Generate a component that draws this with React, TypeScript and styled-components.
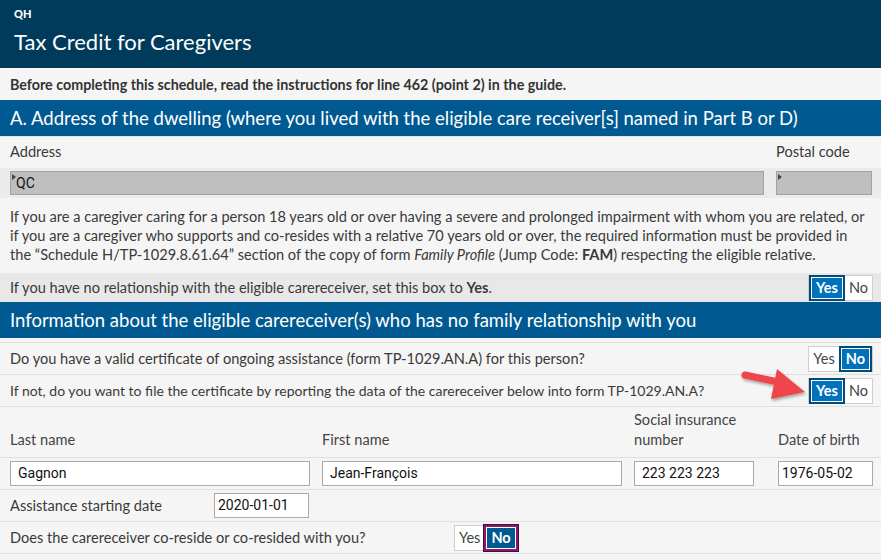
import styled, { createGlobalStyle } from 'styled-components';

const GlobalStyle = createGlobalStyle`
  body {
    margin: 0;
    background: #f5f5f5;
    font-family: Lato, "Open Sans", sans-serif;
    color: #3a3a3a;
  }
`;

const Toggle = ({ value, focus }: { value: 'yes' | 'no'; focus?: boolean }) => (
  <ToggleGroup>
    <ToggleOption $on={value === 'yes'}>Yes</ToggleOption>
    <ToggleOption $on={value === 'no'} $focus={focus && value === 'no'}>
      No
    </ToggleOption>
  </ToggleGroup>
);

const Arrow = () => (
  <ArrowSvg width="74" height="42" viewBox="0 0 74 42">
    <defs>
      <filter id="sh" x="-20%" y="-20%" width="140%" height="160%">
        <feDropShadow dx="1" dy="2" stdDeviation="1.5" floodColor="#000" floodOpacity="0.35" />
      </filter>
    </defs>
    <g filter="url(#sh)">
      <path d="M6 9 L44 17" stroke="#f0454c" strokeWidth="7" strokeLinecap="round" />
      <path d="M38 3 L66 26 L32 33 Z" fill="#f0454c" />
    </g>
  </ArrowSvg>
);

export default function App() {
  return (
    <Page>
      <GlobalStyle />
      <Header>
        <Code>QH</Code>
        <Title>Tax Credit for Caregivers</Title>
      </Header>
      <Notice>Before completing this schedule, read the instructions for line 462 (point 2) in the guide.</Notice>
      <SectionHeader>A. Address of the dwelling (where you lived with the eligible care receiver[s] named in Part B or D)</SectionHeader>

      <AddressLabels>
        <span>Address</span>
        <span>Postal code</span>
      </AddressLabels>
      <AddressInputs>
        <LockedField>QC</LockedField>
        <LockedField />
      </AddressInputs>

      <Paragraph>
        If you are a caregiver caring for a person 18 years old or over having a severe and prolonged impairment with whom you are related, or
        <br />
        if you are a caregiver who supports and co-resides with a relative 70 years old or over, the required information must be provided in
        <br />
        the “Schedule H/TP-1029.8.61.64” section of the copy of form <em>Family Profile</em> (Jump Code: <b>FAM</b>) respecting the eligible relative.
      </Paragraph>
      <QuestionRow $shade>
        <span>
          If you have no relationship with the eligible carereceiver, set this box to <b>Yes</b>.
        </span>
        <Toggle value="yes" />
      </QuestionRow>

      <SectionHeader>Information about the eligible carereceiver(s) who has no family relationship with you</SectionHeader>
      <Spacer />
      <QuestionRow>
        <span>Do you have a valid certificate of ongoing assistance (form TP-1029.AN.A) for this person?</span>
        <Toggle value="no" />
      </QuestionRow>
      <QuestionRow $small>
        <span>If not, do you want to file the certificate by reporting the data of the carereceiver below into form TP-1029.AN.A?</span>
        <ArrowToggle>
          <Arrow />
          <Toggle value="yes" />
        </ArrowToggle>
      </QuestionRow>

      <PersonGrid>
        <Label>Last name</Label>
        <Label>First name</Label>
        <Label>
          Social insurance
          <br />
          number
        </Label>
        <Label>Date of birth</Label>
      </PersonGrid>
      <PersonGrid $inputs>
        <TextField>Gagnon</TextField>
        <TextField>Jean-François</TextField>
        <TextField>223 223 223</TextField>
        <TextField $tight>1976-05-02</TextField>
      </PersonGrid>
      <DateRow>
        <span>Assistance starting date</span>
        <TextField $tight>2020-01-01</TextField>
      </DateRow>
      <ResideRow>
        <span>Does the carereceiver co-reside or co-resided with you?</span>
        <Toggle value="no" focus />
      </ResideRow>
    </Page>
  );
}

const Page = styled.div`
  width: 881px;
  min-height: 560px;
  background: #f5f5f5;
  font-size: 14.6px;
`;

const Header = styled.header`
  background: #003b5c;
  color: #fff;
  height: 68px;
  padding: 7px 14px 0;
  box-sizing: border-box;
`;

const Code = styled.div`
  font-size: 11px;
  font-weight: 900;
  line-height: 14px;
`;

const Title = styled.h1`
  margin: 8px 0 0;
  font-size: 22px;
  font-weight: 400;
  line-height: 26px;
`;

const Notice = styled.div`
  height: 32px;
  display: flex;
  align-items: center;
  padding: 0 10px;
  font-size: 14.3px;
  font-weight: 700;
  color: #333;
`;

const SectionHeader = styled.h2`
  margin: 0;
  background: #005a91;
  color: #fff;
  font-size: 18.5px;
  font-weight: 400;
  height: 36px;
  display: flex;
  align-items: center;
  padding: 0 10px;
  white-space: nowrap;
`;

const AddressLabels = styled.div`
  display: grid;
  grid-template-columns: 1fr 96px;
  column-gap: 12px;
  padding: 6px 9px 0 10px;
  height: 32px;
  box-sizing: border-box;
  border-top: 1px solid #e6e6e6;
`;

const AddressInputs = styled.div`
  display: grid;
  grid-template-columns: 1fr 96px;
  column-gap: 12px;
  padding: 3px 9px 3px 10px;
  background: #ebebeb;
`;

const LockedField = styled.div`
  position: relative;
  height: 24px;
  box-sizing: border-box;
  background: #bfbfbf;
  border: 1px solid #a3a3a3;
  padding: 3px 5px;
  font-family: Roboto, "Liberation Sans", sans-serif;
  font-size: 14px;
  color: #111;
  &:before {
    content: '';
    position: absolute;
    left: 1px;
    top: 2px;
    border-left: 4px solid #444;
    border-top: 3px solid transparent;
    border-bottom: 3px solid transparent;
  }
`;

const Paragraph = styled.p`
  margin: 4px 0 0;
  padding: 5px 10px 6px;
  line-height: 19px;
  white-space: nowrap;
  em {
    font-style: italic;
  }
  b {
    font-weight: 700;
  }
`;

const QuestionRow = styled.div<{ $shade?: boolean; $small?: boolean }>`
  height: 32px;
  box-sizing: border-box;
  display: flex;
  align-items: center;
  justify-content: space-between;
  padding: 0 8px 0 10px;
  font-size: ${(p) => (p.$small ? '14px' : 'inherit')};
  background: ${(p) => (p.$shade ? '#e8e8e8' : '#f5f5f5')};
  border-top: ${(p) => (p.$shade ? '3px solid #f5f5f5' : '1px solid #dedede')};
  b {
    font-weight: 700;
  }
`;

const Spacer = styled.div`
  height: 4px;
`;

const ToggleGroup = styled.div`
  display: flex;
  height: 26px;
  background: #fff;
  border: 1px solid #cfcfcf;
  box-sizing: border-box;
`;

const ToggleOption = styled.span<{ $on?: boolean; $focus?: boolean }>`
  display: flex;
  align-items: center;
  justify-content: center;
  padding: 0 ${(p) => (p.$on ? '5px' : '4px')};
  margin: -1px 0;
  font-size: 14.5px;
  font-weight: ${(p) => (p.$on ? 700 : 400)};
  color: ${(p) => (p.$on ? '#fff' : '#444')};
  background: ${(p) => (p.$on ? (p.$focus ? '#00598f' : '#0072bb') : 'transparent')};
  border: ${(p) => (p.$on ? (p.$focus ? '2px solid #8a1770' : '2px solid #004b7a') : 'none')};
  box-shadow: ${(p) => (p.$on ? (p.$focus ? 'inset 0 0 0 1px #fff, 0 0 0 1px #4a0a38' : 'inset 0 0 0 1px #fff') : 'none')};
`;

const ArrowToggle = styled.div`
  position: relative;
  display: flex;
`;

const ArrowSvg = styled.svg`
  position: absolute;
  right: 60px;
  top: -12px;
`;

const PersonGrid = styled.div<{ $inputs?: boolean }>`
  display: grid;
  grid-template-columns: 300px 300px 120px 1fr;
  column-gap: 12px;
  padding: ${(p) => (p.$inputs ? '3px 8px 3px 10px' : '0 8px 7px 10px')};
  height: ${(p) => (p.$inputs ? '32px' : '51px')};
  box-sizing: border-box;
  align-items: end;
  border-top: 1px solid #dedede;
  & > :nth-child(4) {
    justify-self: end;
    width: 95px;
  }
`;

const Label = styled.div`
  line-height: 20px;
  color: #444;
`;

const TextField = styled.div<{ $tight?: boolean }>`
  height: 25px;
  box-sizing: border-box;
  background: #fff;
  border: 1px solid #a9a9a9;
  padding: 3px ${(p) => (p.$tight ? '3px' : '7px')};
  font-family: Roboto, "Liberation Sans", sans-serif;
  font-size: 14px;
  color: #111;
  white-space: nowrap;
`;

const DateRow = styled.div`
  display: grid;
  grid-template-columns: 204px 95px;
  align-items: center;
  height: 32px;
  box-sizing: border-box;
  padding: 0 10px;
  border-top: 1px solid #dedede;
`;

const ResideRow = styled.div`
  display: grid;
  grid-template-columns: 444px auto;
  justify-content: start;
  align-items: center;
  height: 33px;
  box-sizing: border-box;
  padding: 0 10px;
  border-top: 1px solid #dedede;
  border-bottom: 1px solid #dedede;
`;
